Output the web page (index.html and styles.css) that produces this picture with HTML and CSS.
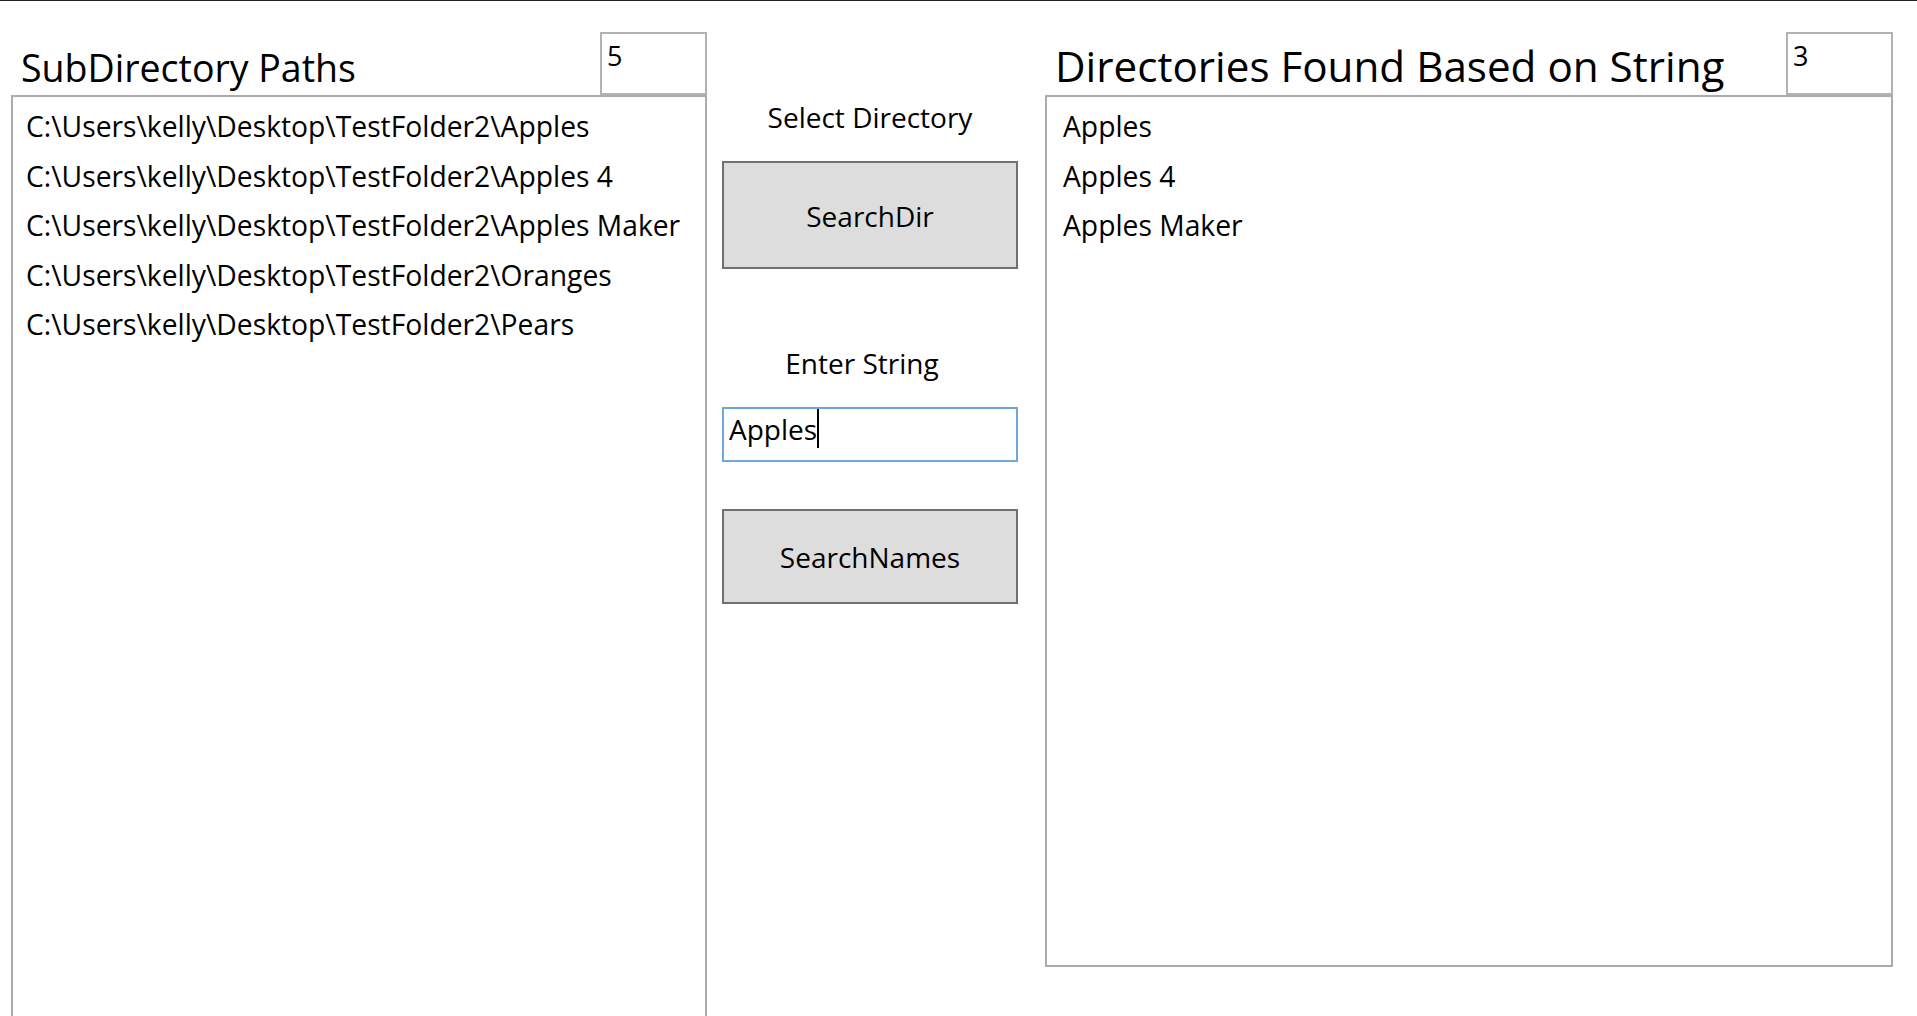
FILE: index.html
```html
<!DOCTYPE html>
<html lang="en">
<head>
<meta charset="utf-8">
<title>Directory Search</title>
<link rel="stylesheet" href="styles.css">
</head>
<body>
<div class="window">
  <section class="col col-left">
    <header class="head">
      <h1 class="title title-left">SubDirectory Paths</h1>
      <div class="count">5</div>
    </header>
    <ul class="list list-left">
      <li>C:\Users\kelly\Desktop\TestFolder2\Apples</li>
      <li>C:\Users\kelly\Desktop\TestFolder2\Apples 4</li>
      <li>C:\Users\kelly\Desktop\TestFolder2\Apples Maker</li>
      <li>C:\Users\kelly\Desktop\TestFolder2\Oranges</li>
      <li>C:\Users\kelly\Desktop\TestFolder2\Pears</li>
    </ul>
  </section>

  <section class="col col-mid">
    <div class="label label-dir">Select Directory</div>
    <button class="btn btn-dir" type="button">SearchDir</button>
    <div class="label label-str">Enter String</div>
    <div class="textbox"><span class="textbox-text">Apples</span><span class="caret"></span></div>
    <button class="btn btn-names" type="button">SearchNames</button>
  </section>

  <section class="col col-right">
    <header class="head">
      <h1 class="title title-right">Directories Found Based on String</h1>
      <div class="count">3</div>
    </header>
    <ul class="list list-right">
      <li>Apples</li>
      <li>Apples 4</li>
      <li>Apples Maker</li>
    </ul>
  </section>
</div>
</body>
</html>
```

FILE: styles.css
```css
html, body {
  margin: 0;
  padding: 0;
  height: 100%;
  overflow: hidden;
  background: #ffffff;
}

body {
  font-family: "Open Sans", "Noto Sans", "DejaVu Sans", sans-serif;
  color: #000000;
}

.window {
  box-sizing: border-box;
  height: 100vh;
  border-top: 1px solid #222222;
  padding-left: 11px;
  display: grid;
  grid-template-columns: 696px 338px 848px;
  align-items: start;
}

.col {
  display: flex;
  flex-direction: column;
}

/* header row: title + count box */
.head {
  height: 94px;
  display: flex;
  justify-content: space-between;
  align-items: flex-end;
}

.title {
  margin: 0;
  font-weight: 400;
  line-height: 50px;
  white-space: nowrap;
}

.title-left {
  font-size: 37.5px;
  margin-left: 10px;
  margin-bottom: 2.5px;
}

.title-right {
  font-size: 42.2px;
  margin-left: 10px;
  margin-bottom: 4.3px;
}

.count {
  box-sizing: border-box;
  width: 107px;
  height: 63px;
  border: 2px solid #b2b2b2;
  padding: 3px 5px;
  font-size: 27px;
  line-height: 37px;
  background: #ffffff;
}

/* list boxes */
.list {
  box-sizing: border-box;
  margin: 0;
  padding: 5px 0 0 0;
  list-style: none;
  border: 2px solid #ababab;
  font-size: 28.25px;
}

.list li {
  line-height: 49.6px;
  white-space: nowrap;
}

.list-left {
  height: 940px;
}

.list-left li {
  padding-left: 13px;
}

.list-right {
  height: 872px;
}

.list-right li {
  padding-left: 16px;
}

/* middle controls */
.col-mid {
  padding-left: 15px;
  width: 296px;
}

.label {
  font-size: 28px;
  line-height: 38px;
  text-align: center;
  white-space: nowrap;
}

.label-dir {
  margin-top: 97px;
}

.label-str {
  margin-top: 75px;
  padding-right: 16px;
}

.btn {
  box-sizing: border-box;
  width: 296px;
  margin: 0;
  padding: 2px 0 0 0;
  border: 2px solid #707070;
  background: #dddddd;
  font-family: inherit;
  font-size: 28px;
  line-height: 38px;
  color: #000000;
  display: flex;
  align-items: center;
  justify-content: center;
}

.btn-dir {
  margin-top: 25px;
  height: 108px;
}

.btn-names {
  margin-top: 47px;
  height: 95px;
  padding-top: 0;
}

.textbox {
  box-sizing: border-box;
  margin-top: 25px;
  width: 296px;
  height: 55px;
  border: 2px solid #72a6df;
  padding-left: 5px;
  display: flex;
  align-items: flex-start;
  font-size: 28px;
  background: #ffffff;
}

.textbox-text {
  line-height: 38px;
  padding-top: 1px;
}

.caret {
  display: block;
  width: 1.5px;
  height: 39px;
  background: #000000;
}
```
